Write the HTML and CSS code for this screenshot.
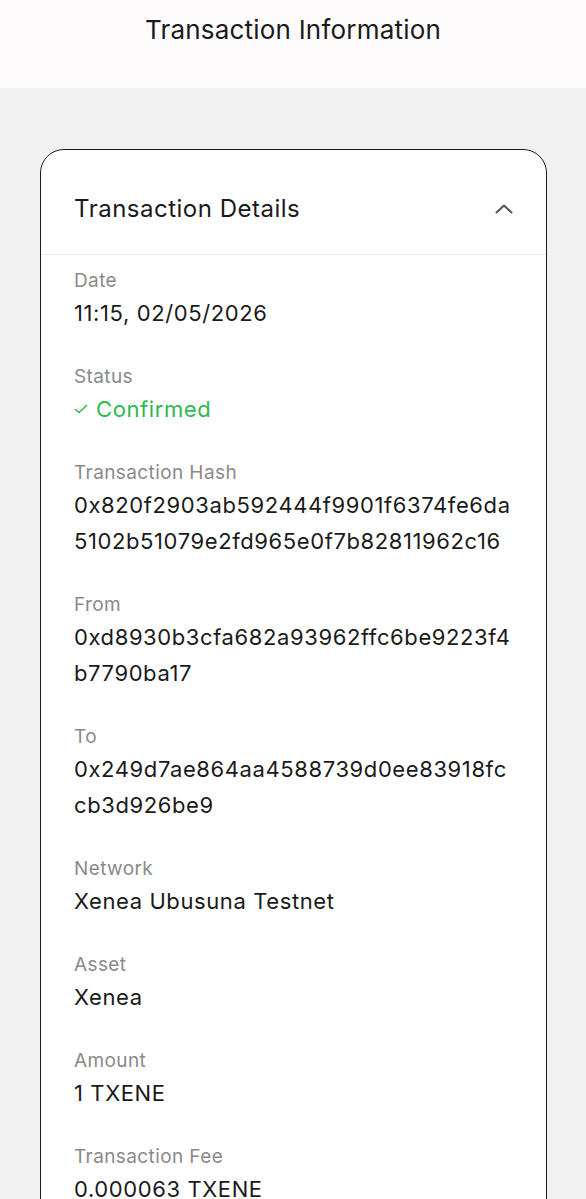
FILE: index.html
```html
<!DOCTYPE html>
<html lang="en">

    <head>
        <meta charset="UTF-8">
        <meta name="viewport" content="width=device-width, initial-scale=1.0">
        <title>Transaction Information</title>

        <link rel="stylesheet" href="styles.css">

    </head>

    <body>
        <header class="top-bar">
            <h1>Transaction Information</h1>
        </header>

        <main class="page">
            <section class="card">
                <div class="card-header">
                    <h2>Transaction Details</h2>
                    <svg class="chevron" width="18" height="10" viewBox="0 0 18 10">
                        <path d="M1.5 8.5 L9 1.5 L16.5 8.5" fill="none" stroke="#555" stroke-width="2" stroke-linecap="round" stroke-linejoin="round"/>
                    </svg>
                </div>

                <ul class="details">
                    <li>
                        <span class="label">Date</span>
                        <span class="value">11:15, 02/05/2026</span>
                    </li>
                    <li>
                        <span class="label">Status</span>
                        <span class="value status">
                            <svg width="14" height="12" viewBox="0 0 14 12">
                                <path d="M1.5 6.5 L5 9.5 L12.5 2.5" fill="none" stroke="#2fb94f" stroke-width="1.6" stroke-linecap="round" stroke-linejoin="round"/>
                            </svg>
                            Confirmed
                        </span>
                    </li>
                    <li>
                        <span class="label">Transaction Hash</span>
                        <span class="value hash">0x820f2903ab592444f9901f6374fe6da5102b51079e2fd965e0f7b82811962c16</span>
                    </li>
                    <li>
                        <span class="label">From</span>
                        <span class="value hash">0xd8930b3cfa682a93962ffc6be9223f4b7790ba17</span>
                    </li>
                    <li>
                        <span class="label">To</span>
                        <span class="value hash">0x249d7ae864aa4588739d0ee83918fccb3d926be9</span>
                    </li>
                    <li>
                        <span class="label">Network</span>
                        <span class="value">Xenea Ubusuna Testnet</span>
                    </li>
                    <li>
                        <span class="label">Asset</span>
                        <span class="value">Xenea</span>
                    </li>
                    <li>
                        <span class="label">Amount</span>
                        <span class="value">1 TXENE</span>
                    </li>
                    <li>
                        <span class="label">Transaction Fee</span>
                        <span class="value">0.000063 TXENE</span>
                    </li>
                </ul>
            </section>
        </main>
    </body>

</html>
```

FILE: styles.css
```css
* {
    margin: 0;
    padding: 0;
    box-sizing: border-box;
}

body {
    font-family: 'Inter', 'Noto Sans', sans-serif;
    background-color: #f1f1f1;
    color: #1a1a1a;
}

.top-bar {
    height: 88px;
    background-color: #fefbfd;
    padding-top: 13px;
}

.top-bar h1 {
    text-align: center;
    font-size: 26px;
    font-weight: 400;
    line-height: 34px;
    letter-spacing: 0.2px;
    color: #1a1a1a;
}

.page {
    padding: 61px 39px 40px 40px;
}

.card {
    background-color: #fff;
    border: 1.5px solid #1c1c1c;
    border-radius: 24px;
    overflow: hidden;
}

.card-header {
    display: flex;
    align-items: center;
    justify-content: space-between;
    padding: 43px 33px 29px 33px;
    border-bottom: 1px solid #ececec;
}

.card-header h2 {
    font-size: 24px;
    font-weight: 400;
    line-height: 32px;
    letter-spacing: 0.5px;
}

.chevron {
    display: block;
}

.details {
    list-style: none;
    padding: 12px 33px 40px 33px;
}

.details li {
    display: flex;
    flex-direction: column;
    margin-bottom: 32px;
}

.label {
    font-size: 19px;
    line-height: 28px;
    letter-spacing: 0.4px;
    color: #8a8a8a;
}

.value {
    font-size: 22px;
    line-height: 36px;
    letter-spacing: 0.6px;
    color: #1a1a1a;
}

.hash {
    word-break: break-all;
}

.status {
    display: flex;
    align-items: center;
    gap: 8px;
    color: #2fb94f;
}
```
